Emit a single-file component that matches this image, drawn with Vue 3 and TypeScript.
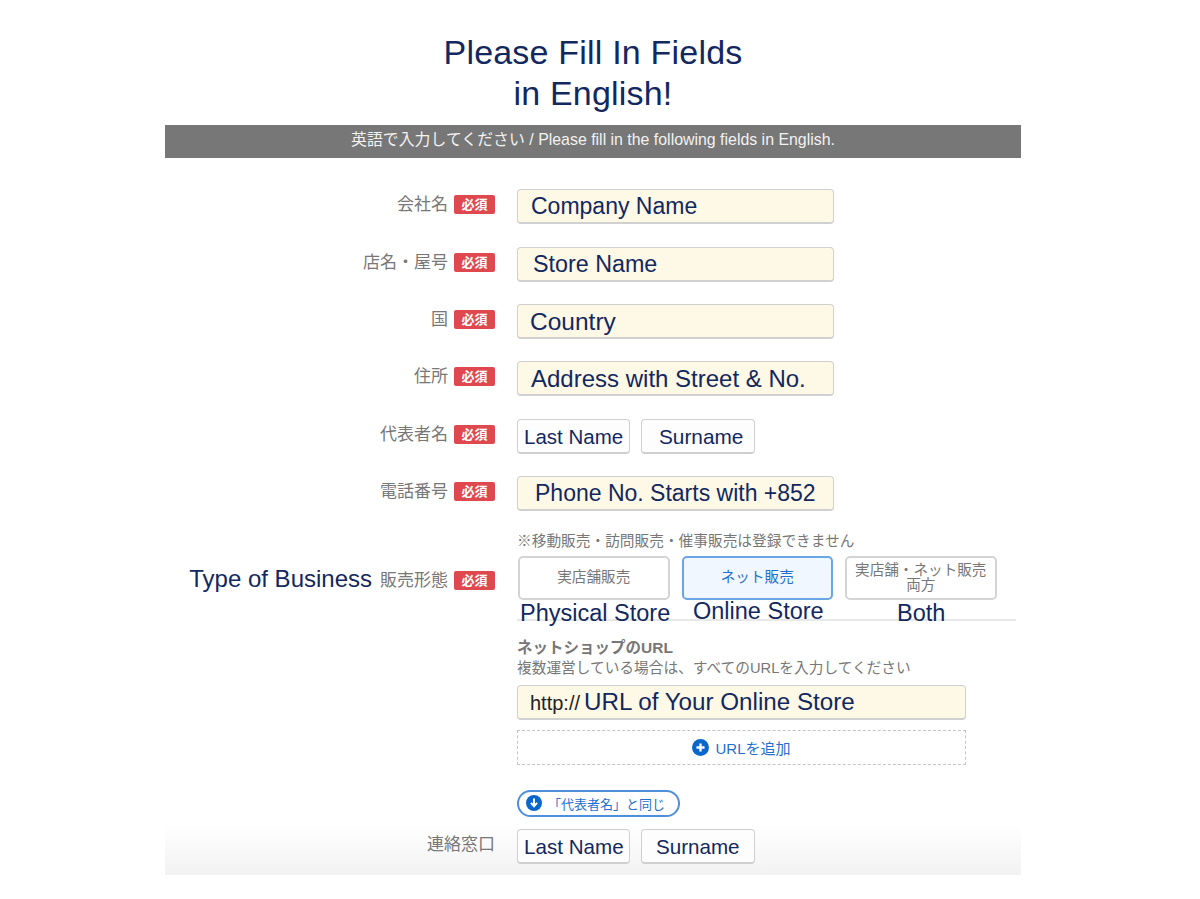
<template>
  <div class="page">
    <h1 class="title">Please Fill In Fields<br>in English!</h1>
    <div class="banner">英語で入力してください / Please fill in the following fields in English.</div>

    <div class="form">
      <div v-for="row in rows" :key="row.label" class="row">
        <div class="label">
          <span class="label-text">{{ row.label }}</span>
          <span class="badge">必須</span>
        </div>
        <div class="fields">
          <div
            v-for="f in row.fields"
            :key="f.text"
            class="input"
            :class="[f.kind]"
            :style="{ paddingLeft: f.pad + 'px', fontSize: f.size + 'px' }"
          >{{ f.text }}</div>
        </div>
      </div>

      <div class="business">
        <div class="label business-label">
          <span class="en">Type of Business</span>
          <span class="label-text">販売形態</span>
          <span class="badge">必須</span>
        </div>
        <div class="business-main">
          <div class="hint">※移動販売・訪問販売・催事販売は登録できません</div>
          <div class="choices">
            <div class="choice">実店舗販売</div>
            <div class="choice active">ネット販売</div>
            <div class="choice">実店舗・ネット販売<br>両方</div>
          </div>
          <div class="choice-names">
            <span>Physical Store</span>
            <span class="online">Online Store</span>
            <span class="both">Both</span>
          </div>
        </div>
      </div>

      <div class="url-block">
        <div class="url-title">ネットショップのURL</div>
        <div class="url-sub">複数運営している場合は、すべてのURLを入力してください</div>
        <div class="input url-input">
          <span class="scheme">http://</span>
          <span>URL of Your Online Store</span>
        </div>
        <div class="add-url">
          <svg class="icon" viewBox="0 0 16 16" width="17" height="17">
            <circle cx="8" cy="8" r="8" fill="#0b66cc" />
            <path d="M8 4.2v7.6M4.2 8h7.6" stroke="#fff" stroke-width="2.2" />
          </svg>
          <span>URLを追加</span>
        </div>
      </div>

      <div class="contact">
        <div class="same-wrap">
          <div class="same">
            <svg class="icon" viewBox="0 0 16 16" width="16" height="16">
              <circle cx="8" cy="8" r="8" fill="#0b66cc" />
              <path d="M8 3.6v7M4.9 7.8 8 11.2l3.1-3.4" fill="none" stroke="#fff" stroke-width="2" />
            </svg>
            <span>「代表者名」と同じ</span>
          </div>
        </div>
        <div class="row last">
          <div class="label">
            <span class="label-text">連絡窓口</span>
          </div>
          <div class="fields">
            <div class="input plain last-name">Last Name</div>
            <div class="input plain surname">Surname</div>
          </div>
        </div>
      </div>
    </div>
  </div>
</template>

<script setup lang="ts">
interface Field {
  text: string
  pad: number
  size: number
  kind: string
}

interface Row {
  label: string
  fields: Field[]
}

const rows: Row[] = [
  { label: '会社名', fields: [{ text: 'Company Name', pad: 13, size: 23, kind: 'wide' }] },
  { label: '店名・屋号', fields: [{ text: 'Store Name', pad: 15, size: 23.3, kind: 'wide' }] },
  { label: '国', fields: [{ text: 'Country', pad: 12, size: 24.5, kind: 'wide' }] },
  { label: '住所', fields: [{ text: 'Address with Street & No.', pad: 13, size: 24, kind: 'wide' }] },
  {
    label: '代表者名',
    fields: [
      { text: 'Last Name', pad: 6, size: 20.5, kind: 'plain last-name' },
      { text: 'Surname', pad: 17, size: 20.8, kind: 'plain surname' }
    ]
  },
  { label: '電話番号', fields: [{ text: 'Phone No. Starts with +852', pad: 17, size: 23, kind: 'wide' }] }
]
</script>

<style>
html,
body {
  background: #fff;
}
</style>

<style scoped>
.page {
  width: 856px;
  height: 875px;
  margin-left: 165px;
  font-family: "Liberation Sans", "Noto Sans CJK JP", sans-serif;
  color: #12285f;
  background: linear-gradient(to bottom, #fff 0, #fff 825px, #f2f2f2 875px);
  overflow: hidden;
}

.title {
  margin: 0;
  padding-top: 32px;
  font-size: 34px;
  font-weight: normal;
  line-height: 41px;
  letter-spacing: 0.2px;
  text-align: center;
  color: #12285f;
}

.banner {
  height: 33px;
  margin-top: 11px;
  background: #777;
  color: #f2f2f2;
  font-size: 15.9px;
  line-height: 29px;
  text-align: center;
}

.form {
  padding-top: 31.2px;
}

.row {
  display: grid;
  grid-template-columns: 330px 1fr;
  column-gap: 22px;
  height: 35px;
  margin-bottom: 22.4px;
  align-items: center;
}

.label {
  display: flex;
  justify-content: flex-end;
  align-items: center;
  gap: 6px;
  padding-bottom: 4px;
  font-size: 17px;
  color: #777;
}

.label-text {
  padding-bottom: 4px;
}

.badge {
  width: 41px;
  height: 19px;
  border-radius: 2px;
  background: #e0484f;
  color: #fff;
  font-size: 13px;
  font-weight: bold;
  line-height: 19px;
  text-align: center;
}

.fields {
  display: flex;
  gap: 11px;
}

.input {
  box-sizing: border-box;
  height: 35px;
  border: 1px solid #d0d0d0;
  border-bottom-width: 2px;
  border-radius: 4px;
  background: #fef8e7;
  font-size: 22px;
  line-height: 33px;
  white-space: nowrap;
}

.wide {
  width: 317px;
}

.plain {
  background: #fdfdfd;
  font-size: 20.6px;
}

.last-name {
  width: 113px;
  padding-left: 6px;
}

.surname {
  width: 114px;
  padding-left: 14px;
}

.business {
  display: grid;
  grid-template-columns: 330px 1fr;
  column-gap: 22px;
  height: 89px;
  margin-top: -2px;
}

.business-label {
  height: 89px;
  padding-bottom: 0;
  padding-top: 8px;
  box-sizing: border-box;
}

.en {
  margin-right: 2px;
  padding-bottom: 2px;
  font-size: 24px;
  color: #12285f;
}

.hint {
  height: 18px;
  padding-top: 1px;
  font-size: 14.7px;
  line-height: 16px;
  color: #777;
}

.choices {
  display: flex;
  gap: 12px;
  margin-top: 5px;
  padding-left: 1px;
}

.choice {
  box-sizing: border-box;
  display: flex;
  align-items: center;
  justify-content: center;
  width: 151.5px;
  height: 44px;
  border: 2px solid #d4d4d4;
  border-radius: 5px;
  background: #fff;
  font-size: 14.6px;
  line-height: 15px;
  text-align: center;
  color: #777;
}

.active {
  border-color: #6aa5e6;
  background: #f0f7ff;
  color: #1f6fd0;
}

.choice-names {
  position: relative;
  height: 19px;
  border-bottom: 2px solid #e8e8e8;
  font-size: 23.5px;
  line-height: 26px;
  margin-right: 5px;
  padding-left: 3px;
  white-space: nowrap;
}

.online {
  position: absolute;
  left: 176px;
  top: -2px;
}

.both {
  position: absolute;
  left: 380px;
}

.url-block {
  margin-left: 352px;
  padding-top: 17px;
}

.url-title {
  font-size: 15.5px;
  font-weight: bold;
  line-height: 20px;
  color: #777;
}

.url-sub {
  font-size: 14.7px;
  line-height: 20px;
  color: #777;
}

.url-input {
  width: 449px;
  margin-top: 7px;
  padding-left: 12px;
  line-height: 31px;
  font-size: 24.2px;
}

.scheme {
  margin-right: 4px;
  font-size: 20px;
  color: #222;
}

.add-url {
  box-sizing: border-box;
  display: flex;
  align-items: center;
  justify-content: center;
  gap: 6px;
  width: 449px;
  height: 35px;
  margin-top: 10px;
  border: 1px dashed #c4c4c4;
  color: #1f6fd0;
  font-size: 15px;
}

.icon {
  flex: none;
}

.contact {
  padding-top: 25px;
}

.same-wrap {
  margin-left: 352px;
  height: 39px;
}

.same {
  box-sizing: border-box;
  display: inline-flex;
  align-items: center;
  gap: 6px;
  width: 163px;
  height: 27px;
  padding-left: 7px;
  border: 2px solid #4d8fdc;
  border-radius: 14px;
  background: #fff;
  color: #1f6fd0;
  font-size: 13px;
}

.last {
  margin-bottom: 0;
}
</style>
